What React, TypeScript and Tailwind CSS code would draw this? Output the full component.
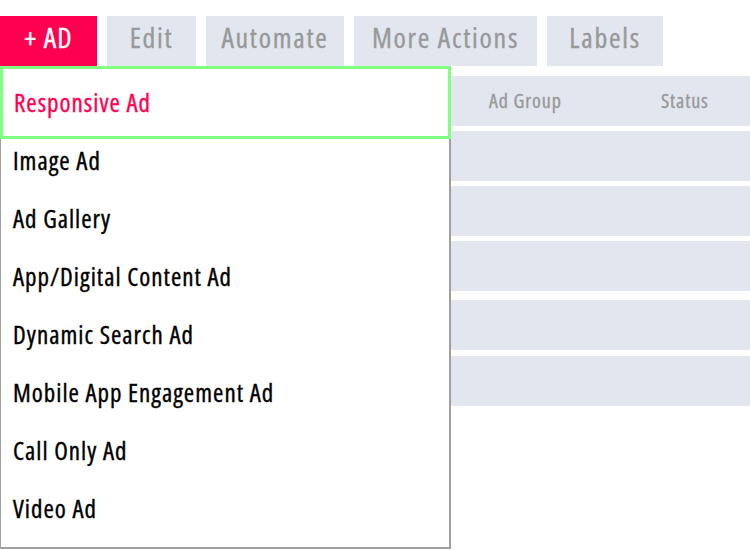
import React from "react";

const buttons = [
  { label: "Edit", w: "w-[89px]" },
  { label: "Automate", w: "w-[138px]" },
  { label: "More Actions", w: "w-[183px]" },
  { label: "Labels", w: "w-[116px]" },
];

const items = [
  "Image Ad",
  "Ad Gallery",
  "App/Digital Content Ad",
  "Dynamic Search Ad",
  "Mobile App Engagement Ad",
  "Call Only Ad",
  "Video Ad",
];

const rowGaps = ["mt-[5px]", "mt-[5px]", "mt-[5px]", "mt-[9px]", "mt-[6px]"];

export default function App() {
  return (
    <div
      className="relative w-[750px] h-[550px] overflow-hidden bg-white font-normal [-webkit-text-stroke:0.35px]"
      style={{ fontFamily: '"Open Sans", "Liberation Sans", sans-serif', fontStretch: "75%" }}
    >
      {/* Toolbar */}
      <div className="flex pt-[16px] gap-[10px]">
        <div className="h-[50px] w-[97px] bg-[#ff0050] text-white text-[28px] tracking-[1.2px] leading-[42px] text-center">
          + AD
        </div>
        {buttons.map((b) => (
          <div
            key={b.label}
            className={`h-[50px] ${b.w} bg-[#e2e7ef] text-[#999999] text-[28px] tracking-[1.7px] leading-[42px] text-center`}
          >
            {b.label}
          </div>
        ))}
      </div>

      {/* Table */}
      <div className="mt-[10px] flex flex-col">
        <div className="flex h-[50px] bg-[#e2e7ef] text-[#999999] text-[20px] tracking-[0.9px] items-center">
          <div className="w-[489px]" />
          <div className="w-[172px]">Ad Group</div>
          <div>Status</div>
        </div>
        {rowGaps.map((g, i) => (
          <div key={i} className={`${g} h-[50px] bg-[#e2e7ef]`} />
        ))}
      </div>

      {/* Dropdown menu */}
      <div className="absolute left-0 top-[66px] w-[451px] flex flex-col bg-white">
        <div className="h-[73px] border-[3px] border-[#80ff80] pl-[11px] flex items-center text-[25px] tracking-[1px] text-[#ff0050]">
          Responsive Ad
        </div>
        <div className="h-[410px] border-l border-r-2 border-b-2 border-[#a0a0a0] pt-[6px] pl-[12px]">
          {items.map((it) => (
            <div key={it} className="h-[58px] leading-[30px] text-[25px] tracking-[1px] text-black whitespace-nowrap">
              {it}
            </div>
          ))}
        </div>
      </div>
    </div>
  );
}
